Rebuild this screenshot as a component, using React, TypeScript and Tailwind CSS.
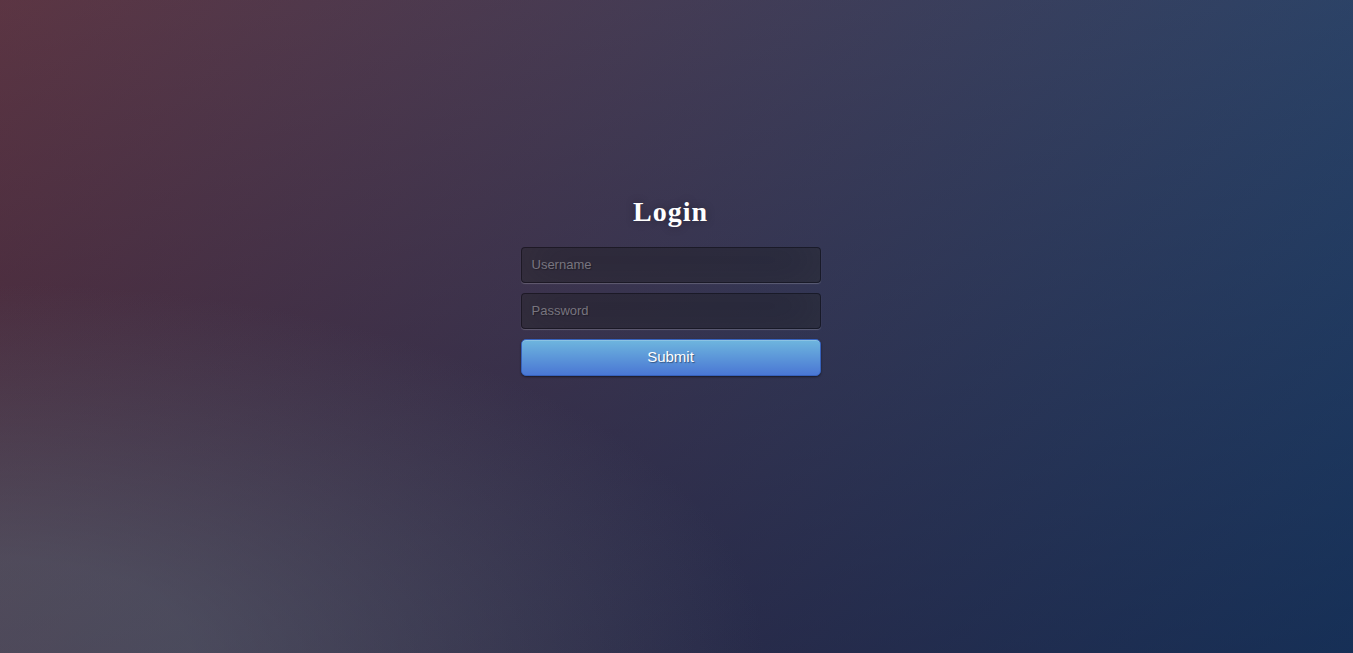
import React from "react";

export default function App() {
  return (
    <div className="w-full h-[653px] overflow-hidden flex items-center justify-center pr-[12px] bg-[#092756] bg-[radial-gradient(ellipse_at_0%_100%,rgba(104,128,138,.4)_10%,rgba(138,114,76,0)_40%),linear-gradient(to_bottom,rgba(57,173,219,.25)_0%,rgba(42,60,87,.4)_100%),linear-gradient(135deg,#670d10_0%,#092756_100%)] font-['Liberation_Sans',Arial,sans-serif]">
      <div className="w-[300px] h-[300px] flex flex-col">
        <h1 className="mt-[17px] mb-[17px] text-center text-[28px] leading-[36px] font-bold tracking-[1px] text-white font-['Liberation_Serif','Times_New_Roman',serif] [text-shadow:0_0_10px_rgba(0,0,0,0.3)]">
          Login
        </h1>
        <form className="flex flex-col" onSubmit={(e) => e.preventDefault()}>
          <input
            type="text"
            placeholder="Username"
            className="w-full h-[36px] mb-[10px] px-[10px] text-[13px] text-white bg-black/30 border border-black/30 rounded-[4px] outline-none placeholder:text-[#78757f] [text-shadow:1px_1px_1px_rgba(0,0,0,0.3)] shadow-[inset_0_-5px_45px_rgba(100,100,100,0.2),0_1px_1px_rgba(255,255,255,0.2)]"
          />
          <input
            type="password"
            placeholder="Password"
            className="w-full h-[36px] mb-[10px] px-[10px] text-[13px] text-white bg-black/30 border border-black/30 rounded-[4px] outline-none placeholder:text-[#78757f] [text-shadow:1px_1px_1px_rgba(0,0,0,0.3)] shadow-[inset_0_-5px_45px_rgba(100,100,100,0.2),0_1px_1px_rgba(255,255,255,0.2)]"
          />
          <button
            type="submit"
            className="w-full h-[37px] text-[15px] text-white rounded-[5px] border border-[#3762bc] bg-[#4a77d4] bg-[linear-gradient(to_bottom,#6eb6de,#4a77d4)] [text-shadow:1px_1px_1px_rgba(0,0,0,0.4)] shadow-[inset_0_1px_0_rgba(255,255,255,0.2),0_1px_2px_rgba(0,0,0,0.5)]"
          >
            Submit
          </button>
        </form>
      </div>
    </div>
  );
}
